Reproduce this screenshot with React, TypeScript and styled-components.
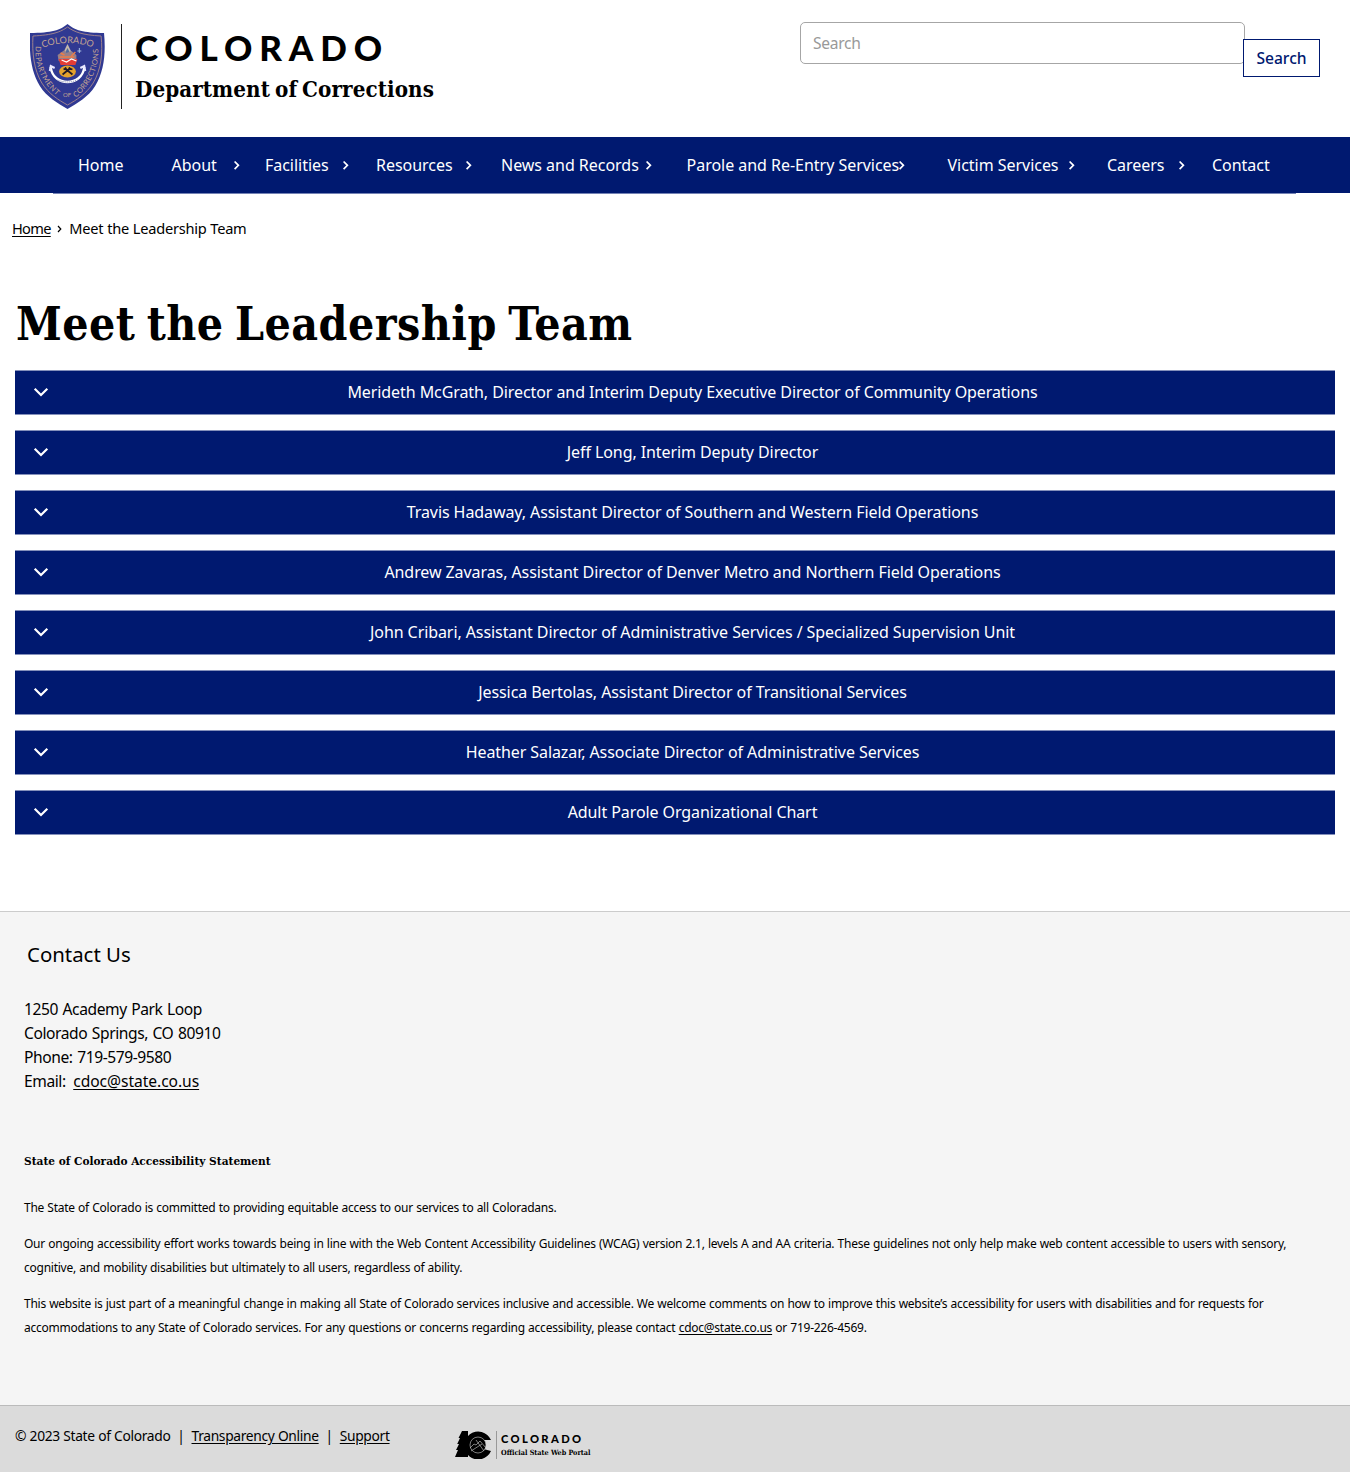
import React from 'react';
import styled, { createGlobalStyle } from 'styled-components';

const NAVY = '#001970';
const sans = '"Noto Sans", "Open Sans", sans-serif';
const slab = '"DejaVu Serif Condensed", "DejaVu Serif", serif';

const GlobalStyle = createGlobalStyle`
  * { box-sizing: border-box; }
  body { margin: 0; background: #fff; color: #000; font-family: ${sans}; }
`;

const Page = styled.div`
  display: flex;
  flex-direction: column;
  min-height: 1473px;
`;

const Header = styled.header`
  display: flex;
  justify-content: space-between;
  height: 137px;
  padding: 22px 30px 0;
`;

const Brand = styled.a`
  display: flex;
  width: 420px;
  color: #000;
  text-decoration: none;
`;

const BrandText = styled.div`
  display: flex;
  flex-direction: column;
  height: 85px;
  margin: 2px 0 0 16px;
  padding-left: 13px;
  border-left: 1px solid #222;
  white-space: nowrap;
`;

const BrandState = styled.span`
  font: 900 35px/40px Lato, sans-serif;
  letter-spacing: 6.85px;
  margin-top: 3px;
`;

const BrandDept = styled.span`
  font: bold 22.2px/28px ${slab};
  letter-spacing: 0.08px;
  word-spacing: -2px;
  margin-top: 8px;
`;

const SearchForm = styled.form`
  display: flex;
  align-items: flex-start;
  margin: 0;
`;

const SearchInput = styled.input`
  width: 445px;
  height: 42px;
  padding: 0 12px;
  border: 1px solid #a6a6a6;
  border-radius: 5px;
  background: #fff;
  font: 15.6px/24px ${sans};
  letter-spacing: -0.3px;
  outline: none;
  &::placeholder { color: #999; opacity: 1; }
`;

const SearchButton = styled.button`
  width: 77px;
  height: 38px;
  margin: 17px 0 0 -2px;
  padding: 0;
  border: 1px solid ${NAVY};
  background: #fff;
  color: ${NAVY};
  font: 500 15.6px/24px ${sans};
`;

const NavBar = styled.nav`
  display: flex;
  height: 56px;
  padding: 0 54px 0 53px;
  background: ${NAVY};
`;

const NavList = styled.ul`
  display: flex;
  height: 57px;
  width: 1243px;
  margin: 0;
  padding: 0 0 0 1px;
  list-style: none;
  border-bottom: 1px solid #7482b4;
`;

const NavItem = styled.li<{ $width: number; $end: number }>`
  display: flex;
  flex: none;
  align-items: center;
  justify-content: space-between;
  width: ${(p) => p.$width}px;
  padding: 0 ${(p) => p.$end}px 0 24px;
`;

const NavLink = styled.a`
  width: 0;
  color: #fff;
  font-size: 16px;
  line-height: 24px;
  letter-spacing: -0.03px;
  white-space: nowrap;
  text-decoration: none;
`;

const Breadcrumb = styled.nav`
  display: flex;
  align-items: center;
  height: 72px;
  padding: 0 0 2px 12px;
  font-size: 14.6px;
  line-height: 24px;
  letter-spacing: -0.25px;
  word-spacing: 0.4px;
`;

const Crumb = styled.a`
  color: #000;
  letter-spacing: -0.7px;
  text-underline-offset: 2px;
`;

const CrumbArrow = styled.span`
  display: flex;
  width: 18.5px;
  padding: 2px 0 0 6.5px;
`;

const Main = styled.main`
  height: 646px;
  padding: 30px 15px 0;
`;

const Title = styled.h1`
  margin: 0 0 17px;
  padding-left: 1px;
  font: bold 46px/58px ${slab};
  letter-spacing: 0.45px;
  word-spacing: -3.5px;
`;

const Accordion = styled.div`
  display: flex;
  flex-direction: column;
  gap: 15px;
`;

const AccordionRow = styled.button`
  display: flex;
  align-items: center;
  height: 45px;
  width: 100%;
  padding: 0 18px 2px;
  border: 0 solid #8490bb;
  border-width: 1px 0;
  background: ${NAVY};
  color: #fff;
  font: 16px/24px ${sans};
  letter-spacing: -0.08px;
`;

const RowLabel = styled.span`
  flex: 1;
  padding-left: 19px;
  text-align: center;
`;

const Footer = styled.footer`
  height: 494px;
  padding: 30px 24px 0;
  border-top: 1px solid #ccc;
  background: #f5f5f5;
`;

const FooterHeading = styled.h2`
  margin: 0 0 30px 3px;
  font: 400 20.4px/25px ${sans};
`;

const Address = styled.address`
  font: normal 15.6px/24px ${sans};
  letter-spacing: -0.42px;
  word-spacing: 0.9px;
  margin-bottom: 56px;
`;

const FooterLink = styled.a`
  color: #000;
  text-underline-offset: 2px;
`;

const EmailLink = styled(FooterLink)`
  margin-left: 3px;
  letter-spacing: -0.05px;
`;

const StatementHeading = styled.h3`
  margin: 0 0 23px;
  font: bold 11.78px/24px ${slab};
`;

const Statement = styled.p`
  margin: 0 0 12px;
  font-size: 12px;
  line-height: 24px;
  letter-spacing: -0.25px;
  word-spacing: 0.36px;
`;

const Legal = styled.div`
  display: flex;
  align-items: flex-start;
  height: 67px;
  padding: 18px 15px 0;
  border-top: 1px solid #bbb;
  background: #dbdbdb;
  font-size: 13.8px;
  line-height: 24px;
  letter-spacing: -0.33px;
  word-spacing: 0.2px;
`;

const LegalText = styled.div`
  width: 440px;
  white-space: pre;
`;

const PortalLogo = styled.div`
  display: flex;
  margin-top: 7px;
`;

const PortalText = styled.div`
  display: flex;
  flex-direction: column;
  height: 28px;
  margin-left: 4px;
  padding-left: 4px;
  border-left: 1px solid #999;
  white-space: nowrap;
`;

const PortalState = styled.span`
  font: 900 11.2px/14px Lato, sans-serif;
  letter-spacing: 2.35px;
  margin-top: 1px;
`;

const PortalCaption = styled.span`
  font: bold 7.2px/10px ${slab};
  letter-spacing: 0;
  word-spacing: 0;
  margin-top: 2px;
`;

function Shield() {
  return (
    <svg width="75" height="88" viewBox="0 0 76 88" preserveAspectRatio="none">
      <defs>
        <path id="arcTop" d="M10 27 Q38 15 68 27" />
        <path id="arcLeft" d="M6 24 C4 45 13 64 34 79" />
        <path id="arcRight" d="M43 78 C62 65 71 44 69 24" />
      </defs>
      <path d="M38 2 C31 8 22 11 0 11 C-1 31 1 50 10 64 C17 75 28 81 38 87 C48 81 59 75 66 64 C75 50 77 31 75 11 C54 11 45 8 38 2Z" fill="#303992" />
      <path d="M38 5 C31 10 23 13 3 14 C2 31 4 48 12 61 C19 72 29 78 38 83 C47 78 57 72 64 61 C72 48 74 31 72 14 C53 13 45 10 38 5Z" fill="none" stroke="#9c818d" strokeWidth="1" />
      <g fill="#c4a592" fontFamily="Lato, sans-serif" fontSize="9.2">
        <text><textPath href="#arcTop" textLength="52" startOffset="3">COLORADO</textPath></text>
        <text fontSize="7.6"><textPath href="#arcLeft" textLength="56">DEPARTMENT</textPath></text>
        <text fontSize="7.6"><textPath href="#arcRight" startOffset="4" textLength="56">CORRECTIONS</textPath></text>
        <text x="33.5" y="75" fontSize="6">OF</text>
      </g>
      <path d="M38 22 L44 34 H32Z" fill="#c4b7ac" />
      <path d="M38 26 L41 32 H35Z" fill="#526b9c" />
      <path d="M28 33 L35 28 L37 31 L42 29 L47 33 L47 39 H29Z" fill="#967f89" />
      <path d="M31 31 L35 33 M42 34 L46 30 M30 35 H45" stroke="#ef7d45" strokeWidth="1.4" />
      <path d="M50 26 V31 M48 29 H52" stroke="#a9c1e2" />
      <path d="M29 37 H48 L46 43 H31Z" fill="#e33d37" />
      <path d="M32 38 L37 40 L42 37 L47 39" fill="none" stroke="#fff" strokeWidth="1.2" />
      <ellipse cx="38" cy="49.5" rx="8.5" ry="6" fill="#e5a22c" />
      <path d="M33 52.5 L41 46 M35 46 L43 52.5 M34 47.5 L37 46 M39 46 L43 47.5" stroke="#231b28" strokeWidth="1.8" />
      <path d="M21 45 C23 65 53 65 55 45" fill="none" stroke="#fff" strokeWidth="2.4" />
      <path d="M20 49 L21 44 L25 46 M51 46 L55 44 L56 49" fill="none" stroke="#e8e8ff" strokeWidth="2" />
      <path d="M28 58 Q38 62 48 58" fill="none" stroke="#777aa8" strokeWidth="1" strokeDasharray="1 1" />
    </svg>
  );
}

function PortalMark() {
  return (
    <svg width="37" height="28" viewBox="0 0 37 28">
      <path d="M7 0 L3.5 7 H5 L2.2 13 H4 L1 19 H3 L0 26 H13 V0Z" fill="#000" />
      <path d="M36 9 H28.5 A7 7 0 1 0 28.5 18 L36 20 A14 14 0 1 1 36 9Z" fill="#000" />
      <circle cx="23" cy="14" r="8" fill="#000" stroke="#cfcfcf" strokeWidth=".6" />
      <path d="M15 17 L19 13 L21 14 L25 10 L31 17 M16 20 L27 13 M21 9 L29 20" fill="none" stroke="#cfcfcf" strokeWidth=".6" />
    </svg>
  );
}

const NavChevron = () => (
  <svg width="6" height="10" viewBox="0 0 6 10">
    <path d="M0.6 1.5 L4.4 5.3 L0.6 9.1" fill="none" stroke="#fff" strokeWidth="1.7" />
  </svg>
);

const RowChevron = () => (
  <svg width="16" height="10" viewBox="0 0 16 10">
    <path d="M1.7 1.7 L8 8 L14.3 1.7" fill="none" stroke="#fff" strokeWidth="2.2" />
  </svg>
);

const navItems = [
  { label: 'Home', width: 93.5, end: 0, menu: false },
  { label: 'About', width: 93.5, end: 1.5, menu: true },
  { label: 'Facilities', width: 111, end: 3, menu: true },
  { label: 'Resources', width: 125, end: 5, menu: true },
  { label: 'News and Records', width: 185.6, end: 11, menu: true },
  { label: 'Parole and Re-Entry Services', width: 260.9, end: 18.5, menu: true },
  { label: 'Victim Services', width: 159.5, end: 8, menu: true },
  { label: 'Careers', width: 105, end: 3, menu: true },
  { label: 'Contact', width: 108, end: 0, menu: false },
];

const leaders = [
  'Merideth McGrath, Director and Interim Deputy Executive Director of Community Operations',
  'Jeff Long, Interim Deputy Director',
  'Travis Hadaway, Assistant Director of Southern and Western Field Operations',
  'Andrew Zavaras, Assistant Director of Denver Metro and Northern Field Operations',
  'John Cribari, Assistant Director of Administrative Services / Specialized Supervision Unit',
  'Jessica Bertolas, Assistant Director of Transitional Services',
  'Heather Salazar, Associate Director of Administrative Services',
  'Adult Parole Organizational Chart',
];

export default function App() {
  return (
    <Page>
      <GlobalStyle />
      <Header>
        <Brand href="#">
          <Shield />
          <BrandText>
            <BrandState>COLORADO</BrandState>
            <BrandDept>Department of Corrections</BrandDept>
          </BrandText>
        </Brand>
        <SearchForm>
          <SearchInput placeholder="Search" />
          <SearchButton type="button">Search</SearchButton>
        </SearchForm>
      </Header>
      <NavBar>
        <NavList>
          {navItems.map((item) => (
            <NavItem key={item.label} $width={item.width} $end={item.end}>
              <NavLink href="#">{item.label}</NavLink>
              {item.menu && <NavChevron />}
            </NavItem>
          ))}
        </NavList>
      </NavBar>
      <Breadcrumb>
        <Crumb href="#">Home</Crumb>
        <CrumbArrow>
          <svg width="5" height="8" viewBox="0 0 5 8">
            <path d="M1 1 L3.8 4 L1 7" fill="none" stroke="#000" strokeWidth="1.2" />
          </svg>
        </CrumbArrow>
        <span>Meet the Leadership Team</span>
      </Breadcrumb>
      <Main>
        <Title>Meet the Leadership Team</Title>
        <Accordion>
          {leaders.map((name) => (
            <AccordionRow key={name}>
              <RowChevron />
              <RowLabel>{name}</RowLabel>
            </AccordionRow>
          ))}
        </Accordion>
      </Main>
      <Footer>
        <FooterHeading>Contact Us</FooterHeading>
        <Address>
          1250 Academy Park Loop<br />
          Colorado Springs, CO 80910<br />
          Phone: 719-579-9580<br />
          Email: <EmailLink href="#">cdoc@state.co.us</EmailLink>
        </Address>
        <StatementHeading>State of Colorado Accessibility Statement</StatementHeading>
        <Statement>The State of Colorado is committed to providing equitable access to our services to all Coloradans.</Statement>
        <Statement>
          Our ongoing accessibility effort works towards being in line with the Web Content Accessibility Guidelines (WCAG) version 2.1, levels A and AA criteria. These guidelines not only help make web content accessible to users with sensory,<br />
          cognitive, and mobility disabilities but ultimately to all users, regardless of ability.
        </Statement>
        <Statement>
          This website is just part of a meaningful change in making all State of Colorado services inclusive and accessible. We welcome comments on how to improve this website’s accessibility for users with disabilities and for requests for<br />
          accommodations to any State of Colorado services. For any questions or concerns regarding accessibility, please contact <FooterLink href="#">cdoc@state.co.us</FooterLink> or 719-226-4569.
        </Statement>
      </Footer>
      <Legal>
        <LegalText>
          {'© 2023 State of Colorado  |  '}
          <FooterLink href="#">Transparency Online</FooterLink>
          {'  |  '}
          <FooterLink href="#">Support</FooterLink>
        </LegalText>
        <PortalLogo>
          <PortalMark />
          <PortalText>
            <PortalState>COLORADO</PortalState>
            <PortalCaption>Official State Web Portal</PortalCaption>
          </PortalText>
        </PortalLogo>
      </Legal>
    </Page>
  );
}
